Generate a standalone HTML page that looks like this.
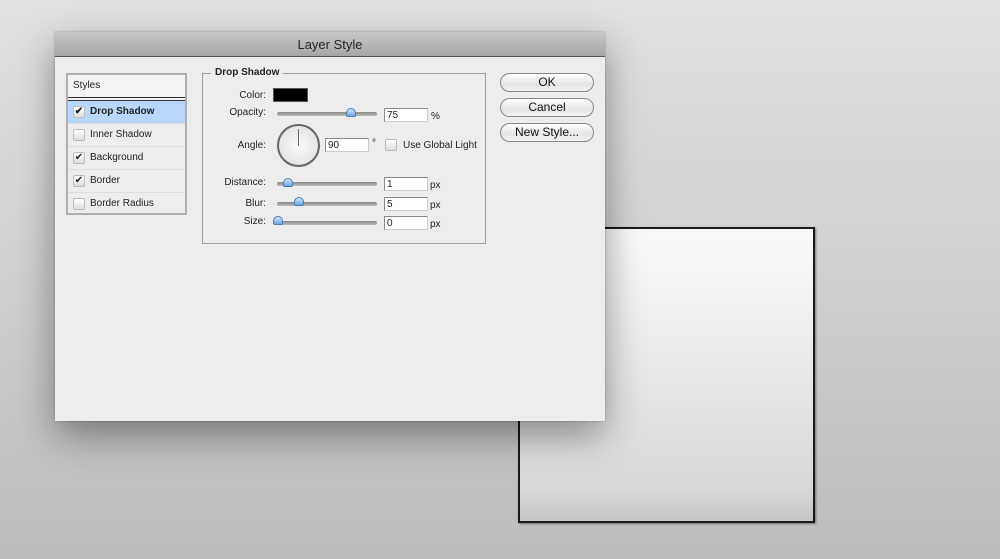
<!DOCTYPE html>
<html><head><meta charset="utf-8"><style>
*{margin:0;padding:0;box-sizing:border-box}
body{width:1000px;height:559px;overflow:hidden;position:relative;background:linear-gradient(#e2e2e2,#bcbcbc);font-family:"Liberation Sans",Arial,sans-serif;font-size:10px;color:#222}
.a{position:absolute}
.box{left:518px;top:227px;width:297px;height:296px;border:2px solid #1a1a1a;background:linear-gradient(#fafafa,#e6e6e6 55%,#d8d8d8 90%,#c4c4c4);box-shadow:1px 1px 2px rgba(0,0,0,.4)}
.dlg{left:55px;top:32px;width:550px;height:389px;background:#ededed;box-shadow:0 14px 36px rgba(0,0,0,.4),0 0 2px rgba(0,0,0,.3)}
.title{left:0;top:0;width:550px;height:25px;background:linear-gradient(#c8c8c8,#a6a6a6);border-bottom:1px solid #555;text-align:center;font-size:13px;line-height:25px;color:#222}
.list{left:11px;top:41px;width:121px;height:142px;border:2px solid #b0b0b0;background:#ededed}
.hdr{height:26px;line-height:22px;padding-left:5px;border-bottom:4px double #333;background:#f3f3f3}
.row{height:23px;border-bottom:1px solid #ddd;line-height:22px;padding-left:22px;position:relative}
.row .cb{position:absolute;left:5px;top:5px;width:12px;height:12px;border:1px solid #bbb;border-radius:2px;background:linear-gradient(#fff,#ddd);font-size:10px;line-height:10px;text-align:center;color:#222}
.sel{background:#b9d7fa;font-weight:bold}
.grp{left:147px;top:41px;width:284px;height:171px;border:1px solid #a0a0a0}
.leg{left:156px;top:35px;background:#ededed;padding:0 4px;font-weight:bold}
.lbl{text-align:right;width:60px}
.trk{height:4px;background:linear-gradient(#888,#bbb);border-radius:2px;width:100px}
.th{width:10px;height:9px;background:linear-gradient(#cfe6ff,#6fa6de);border:1px solid #4b7fb4;border-radius:5px 5px 2px 2px}
.in{width:44px;height:14px;border:1px solid #888;border-right-color:#ccc;border-bottom-color:#ccc;background:#fff;padding-left:2px;line-height:14px;font-size:10px}
.btn{left:445px;width:94px;height:19px;border:1px solid #888;border-radius:10px;background:linear-gradient(#fff,#e4e4e4 60%,#f4f4f4);text-align:center;line-height:17px;font-size:12px;color:#111}
</style></head><body>
<div class="a box"></div>
<div class="a dlg">
 <div class="a title">Layer Style</div>
 <div class="a list">
  <div class="hdr">Styles</div>
  <div class="row sel"><span class="cb">✔</span>Drop Shadow</div>
  <div class="row"><span class="cb"></span>Inner Shadow</div>
  <div class="row"><span class="cb">✔</span>Background</div>
  <div class="row"><span class="cb">✔</span>Border</div>
  <div class="row" style="border:0"><span class="cb"></span>Border Radius</div>
 </div>
 <div class="a grp"></div>
 <div class="a leg">Drop Shadow</div>
 <div class="a lbl" style="left:151px;top:58px">Color:</div>
 <div class="a" style="left:218px;top:56px;width:35px;height:14px;background:#000;border:1px solid #555"></div>
 <div class="a lbl" style="left:151px;top:75px">Opacity:</div>
 <div class="a trk" style="left:222px;top:80px"></div>
 <div class="a th" style="left:291px;top:76px"></div>
 <div class="a in" style="left:329px;top:76px">75</div>
 <div class="a" style="left:376px;top:79px">%</div>
 <div class="a lbl" style="left:151px;top:108px">Angle:</div>
 <div class="a" style="left:222px;top:92px;width:43px;height:43px;border:2px solid #666;border-radius:50%;background:radial-gradient(#fafafa,#ddd)"></div>
 <div class="a" style="left:243px;top:97px;width:1px;height:17px;background:#666"></div>
 <div class="a in" style="left:270px;top:106px">90</div>
 <div class="a" style="left:317px;top:106px">°</div>
 <div class="a" style="left:330px;top:107px;width:12px;height:12px;border:1px solid #bbb;border-radius:2px;background:linear-gradient(#fff,#ddd)"></div>
 <div class="a" style="left:348px;top:108px">Use Global Light</div>
 <div class="a lbl" style="left:151px;top:145px">Distance:</div>
 <div class="a trk" style="left:222px;top:150px"></div>
 <div class="a th" style="left:228px;top:146px"></div>
 <div class="a in" style="left:329px;top:145px">1</div>
 <div class="a" style="left:375px;top:148px">px</div>
 <div class="a lbl" style="left:151px;top:166px">Blur:</div>
 <div class="a trk" style="left:222px;top:170px"></div>
 <div class="a th" style="left:239px;top:165px"></div>
 <div class="a in" style="left:329px;top:165px">5</div>
 <div class="a" style="left:375px;top:168px">px</div>
 <div class="a lbl" style="left:151px;top:184px">Size:</div>
 <div class="a trk" style="left:222px;top:189px"></div>
 <div class="a th" style="left:218px;top:184px"></div>
 <div class="a in" style="left:329px;top:184px">0</div>
 <div class="a" style="left:375px;top:187px">px</div>
 <div class="a btn" style="top:41px">OK</div>
 <div class="a btn" style="top:66px">Cancel</div>
 <div class="a btn" style="top:91px">New Style...</div>
</div>
</body></html>
